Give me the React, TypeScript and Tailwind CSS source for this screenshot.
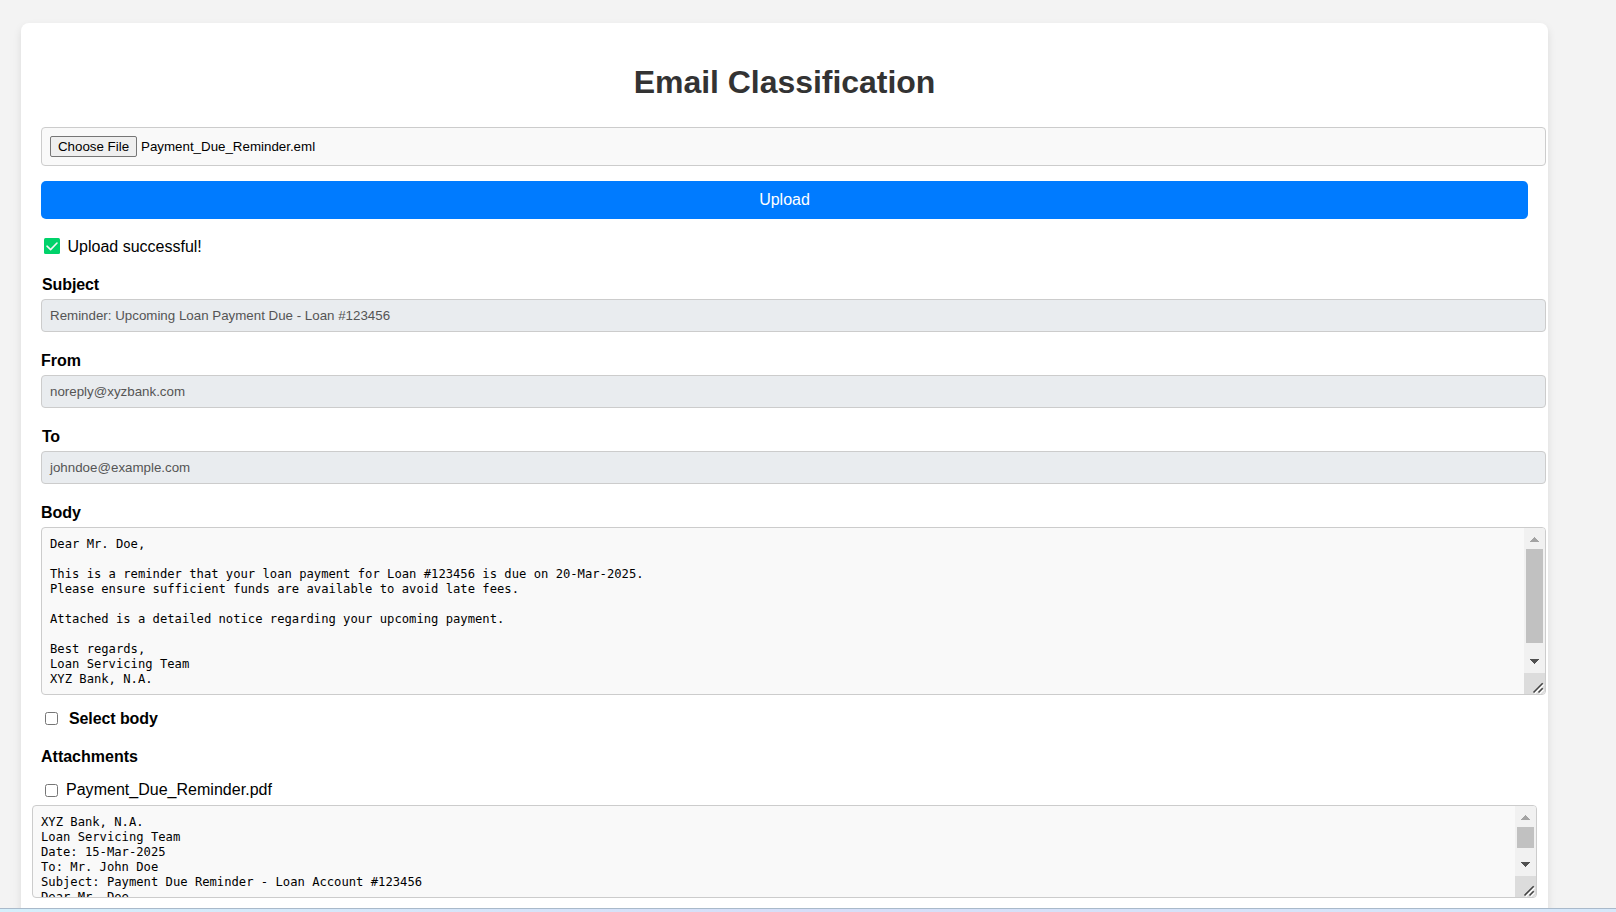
import type { ReactNode } from "react";

const bodyText = `Dear Mr. Doe,

This is a reminder that your loan payment for Loan #123456 is due on 20-Mar-2025.
Please ensure sufficient funds are available to avoid late fees.

Attached is a detailed notice regarding your upcoming payment.

Best regards,
Loan Servicing Team
XYZ Bank, N.A.`;

const pdfText = `XYZ Bank, N.A.
Loan Servicing Team
Date: 15-Mar-2025
To: Mr. John Doe
Subject: Payment Due Reminder - Loan Account #123456
Dear Mr. Doe,`;

function Field({ label, value, labelClass = "" }: { label: string; value: string; labelClass?: string }) {
  return (
    <div className="h-[76px]">
      <div className="h-[23px] text-base leading-[18px] font-bold whitespace-nowrap">
        <span className={labelClass}>{label}</span>
      </div>
      <div className="flex h-[33px] w-[1505px] items-center rounded border border-[#ccc] bg-[#e9ecef] px-2 text-[13.333px] leading-[15px] whitespace-nowrap text-[#555]">
        {value}
      </div>
    </div>
  );
}

function TextBox({ text, size, thumb }: { text: string; size: string; thumb: string }) {
  return (
    <div className={`flex w-[1505px] overflow-hidden rounded border border-[#ccc] bg-[#f9f9f9] ${size}`}>
      <pre className="flex-1 overflow-hidden px-2 pt-[9px] font-['DejaVu_Sans_Mono',monospace] text-[12.18px] leading-[15px]">{text}</pre>
      <div className="flex w-[21px] flex-col bg-[#f1f1f1]">
        <svg className="h-[21px] w-[21px] shrink-0" viewBox="0 0 21 21" shapeRendering="crispEdges">
          <path d="M6 14h9l-4.5-5z" fill="#a3a3a3" />
        </svg>
        <div className={`ml-0.5 w-[17px] bg-[#c1c1c1] ${thumb}`} />
        <div className="flex-1" />
        <svg className="h-[21px] w-[21px] shrink-0" viewBox="0 0 21 21" shapeRendering="crispEdges">
          <path d="M6 7h9l-4.5 5z" fill="#505050" />
        </svg>
        <svg className="h-[21px] w-[21px] shrink-0 bg-[#dcdcdc]" viewBox="0 0 21 21" fill="none">
          <path d="M10.5 20.5L19.5 11.5M15.5 20.5L19.5 16.5" stroke="#fff" strokeWidth="1.6" />
          <path d="M9.5 19.5L18.7 10.3M14.5 19.5L18.7 15.3" stroke="#444" strokeWidth="1.6" />
        </svg>
      </div>
    </div>
  );
}

function CheckRow({ className, children }: { className: string; children: ReactNode }) {
  return (
    <div className={`flex text-base leading-[18px] whitespace-nowrap ${className}`}>
      {children}
    </div>
  );
}

function Box() {
  return <span className="ml-1 h-[13px] w-[13px] shrink-0 rounded-[2.5px] border border-[#767676] bg-white" />;
}

export default function App() {
  return (
    <div className="flex h-[912px] w-[1616px] flex-col overflow-hidden bg-[#f3f3f3] font-['Liberation_Sans',Arial,sans-serif] text-black">
      <div className="h-[908px] overflow-hidden pt-[23px] pl-[21px]">
        <main className="h-[1000px] w-[1527px] rounded-lg bg-white px-5 pt-[41px] shadow-[0_4px_8px_rgba(0,0,0,0.1)]">
          <h1 className="h-[63px] text-center text-[32px] leading-[37px] font-bold tracking-[-0.04px] whitespace-nowrap text-[#333]">
            Email Classification
          </h1>
          <div className="flex h-[39px] w-[1505px] items-center gap-1 rounded border border-[#ccc] bg-[#f9f9f9] px-2 text-[13.333px] leading-[15px] whitespace-nowrap">
            <button className="h-[21px] w-[87px] rounded-[2px] border border-[#767676] bg-[#efefef]">Choose File</button>
            <span>Payment_Due_Reminder.eml</span>
          </div>
          <button className="mt-[15px] h-[38px] w-full rounded-[5px] bg-[#007bff] text-base leading-[18px] text-white">Upload</button>
          <div className="mt-[18px] flex h-[37px] items-start text-base leading-[20px]">
            <svg className="mt-px ml-[3px] h-4 w-4" viewBox="0 0 16 16" fill="none">
              <rect width="16" height="16" rx="1.5" fill="#00d26a" />
              <path d="M3 8.2L6.6 11.6L13 5" stroke="#f4f4f4" strokeWidth="1.6" strokeLinecap="round" strokeLinejoin="round" />
            </svg>
            <span className="ml-[7.5px] whitespace-nowrap">Upload successful!</span>
          </div>
          <div className="mt-[2px]">
            <Field label="Subject" value="Reminder: Upcoming Loan Payment Due - Loan #123456" labelClass="ml-px tracking-[-0.1px]" />
            <Field label="From" value="noreply@xyzbank.com" />
            <Field label="To" value="johndoe@example.com" labelClass="ml-px tracking-[-0.4px]" />
          </div>
          <div className="h-[23px] text-base leading-[18px] font-bold">Body</div>
          <TextBox text={bodyText} size="h-[168px]" thumb="h-[94px]" />
          <CheckRow className="mt-[15px] h-[38px] font-bold">
            <span className="flex pt-[2px]"><Box /></span>
            <span className="ml-[11px] tracking-[-0.1px]">Select body</span>
          </CheckRow>
          <div className="h-[33px] text-base leading-[18px] font-bold">Attachments</div>
          <CheckRow className="h-[24px]">
            <span className="flex pt-[3px]"><Box /></span>
            <span className="ml-2 tracking-[0.02px]">Payment_Due_Reminder.pdf</span>
          </CheckRow>
          <div className="-ml-[9px]">
            <TextBox text={pdfText} size="h-[93px]" thumb="h-[21px]" />
          </div>
        </main>
      </div>
      <div className="h-1 border-t border-[#a9b9ca] bg-linear-to-r from-[#d5effb] via-[#d6def8] to-[#d6e8fa]" />
    </div>
  );
}
